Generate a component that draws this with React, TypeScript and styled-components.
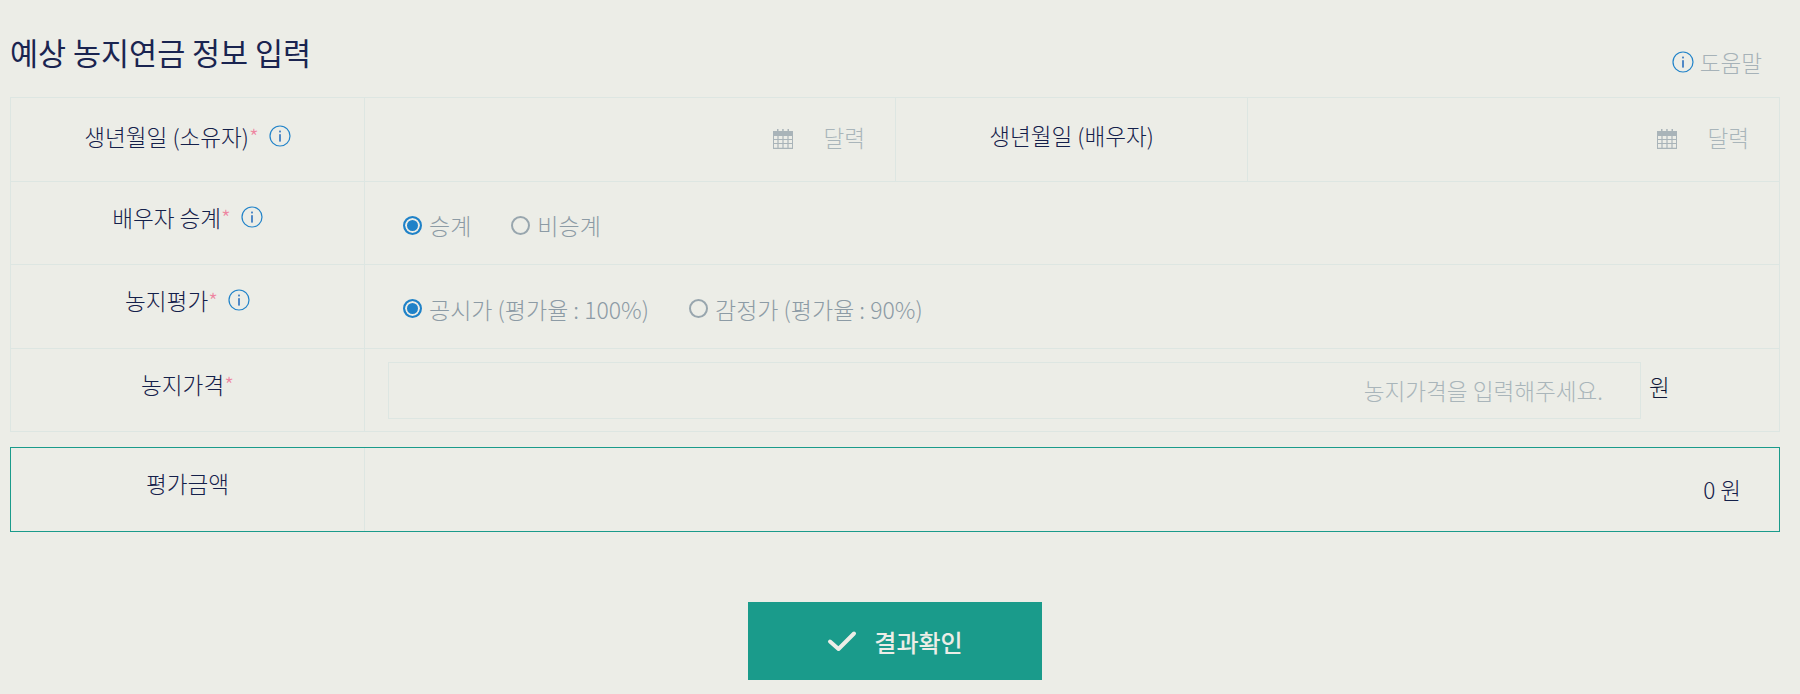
import React from "react";
import styled, { createGlobalStyle } from "styled-components";

const GlobalStyle = createGlobalStyle`
  html, body {
    margin: 0;
    padding: 0;
    background: #ecede7;
    font-family: "Noto Sans CJK KR", "Noto Sans", sans-serif;
    font-weight: 300;
    color: #14204a;
  }
  * {
    box-sizing: border-box;
  }
`;

const InfoIcon = ({ size = 22 }: { size?: number }) => (
  <svg width={size} height={size} viewBox="0 0 22 22" fill="none">
    <circle cx="11" cy="11" r="10" stroke="#2183c9" strokeWidth="1.2" />
    <rect x="10.2" y="9.2" width="1.6" height="7.4" fill="#2a6fbd" />
    <rect x="10.2" y="5.6" width="1.6" height="1.8" fill="#2a6fbd" />
  </svg>
);

const CalendarIcon = () => (
  <svg width="20" height="20" viewBox="0 0 20 20" fill="#a9b4b9">
    <rect x="4" y="0" width="1.5" height="3" />
    <rect x="9.2" y="0" width="1.5" height="3" />
    <rect x="14.5" y="0" width="1.5" height="3" />
    <path d="M0 2h20v18H0zM1 7v3h3.4V7zm4.6 0v3H9.4V7zm5 0v3h3.8V7zm5 0v3H19V7zM1 11v3h3.4v-3zm4.6 0v3H9.4v-3zm5 0v3h3.8v-3zm5 0v3H19v-3zM1 15v3.8h3.4V15zm4.6 0v3.8H9.4V15zm5 0v3.8h3.8V15zm5 0v3.8H19V15z" fillRule="evenodd" />
  </svg>
);

const CheckIcon = () => (
  <svg width="30" height="22" viewBox="0 0 30 22" fill="none">
    <path d="M3 11.5L11.5 19L27 3.5" stroke="#ecede7" strokeWidth="4" strokeLinecap="round" strokeLinejoin="round" />
  </svg>
);

const App = () => {
  return (
    <Page>
      <GlobalStyle />
      <Head>
        <Title>예상 농지연금 정보 입력</Title>
        <Help>
          <InfoIcon />
          도움말
        </Help>
      </Head>
      <Table>
        <Row>
          <Label $top={22}>
            생년월일 (소유자)<Star>*</Star>
            <InfoWrap><InfoIcon /></InfoWrap>
          </Label>
          <DateCell>
            <CalendarIcon />
            <CalendarText>달력</CalendarText>
          </DateCell>
          <Label $top={21}>생년월일 (배우자)</Label>
          <DateCell>
            <CalendarIcon />
            <CalendarText>달력</CalendarText>
          </DateCell>
        </Row>
        <Row>
          <Label>
            배우자 승계<Star>*</Star>
            <InfoWrap><InfoIcon /></InfoWrap>
          </Label>
          <RadioCell>
            <RadioOption><Radio $checked />승계</RadioOption>
            <RadioOption><Radio />비승계</RadioOption>
          </RadioCell>
        </Row>
        <Row>
          <Label>
            농지평가<Star>*</Star>
            <InfoWrap><InfoIcon /></InfoWrap>
          </Label>
          <RadioCell>
            <RadioOption><Radio $checked />공시가 (평가율 : 100%)</RadioOption>
            <RadioOption><Radio />감정가 (평가율 : 90%)</RadioOption>
          </RadioCell>
        </Row>
        <Row>
          <Label>농지가격<Star>*</Star></Label>
          <PriceCell>
            <PriceInput placeholder="농지가격을 입력해주세요." />
            <Unit>원</Unit>
          </PriceCell>
        </Row>
      </Table>
      <ResultBox>
        <Label>평가금액</Label>
        <ResultValue>0 원</ResultValue>
      </ResultBox>
      <Actions>
        <SubmitButton type="button">
          <CheckIcon />
          결과확인
        </SubmitButton>
      </Actions>
    </Page>
  );
};

export default App;

const Page = styled.div`
  width: 1800px;
  height: 694px;
  padding: 0 20px 0 10px;
  overflow: hidden;
`;

const Head = styled.div`
  height: 97px;
  display: flex;
  justify-content: space-between;
`;

const Title = styled.h2`
  margin: 29px 0 0;
  font-size: 30.5px;
  line-height: 46px;
  font-weight: 400;
  color: #1a2450;
`;

const Help = styled.div`
  margin: 44px 18px 0 0;
  height: 36px;
  display: flex;
  align-items: center;
  gap: 6px;
  font-size: 22.6px;
  color: #a6b2b8;
`;

const Table = styled.div`
  border: 1px solid #dde6e2;
`;

const Row = styled.div`
  display: grid;
  grid-template-columns: 354px 531px 352px 1fr;
  height: 83.5px;
  border-bottom: 1px solid #dde6e2;
  &:last-child {
    border-bottom: 0;
    height: 82.5px;
  }
`;

const Label = styled.div<{ $top?: number }>`
  display: flex;
  justify-content: center;
  align-items: flex-start;
  padding-top: ${(p) => p.$top ?? 19}px;
  font-size: 22.6px;
  line-height: 34px;
  color: #14204a;
  border-right: 1px solid #dde6e2;
`;

const Star = styled.span`
  font-size: 22px;
  line-height: 32px;
  color: #ee86a1;
`;

const InfoWrap = styled.span`
  display: flex;
  margin: 5px 0 0 10px;
`;

const DateCell = styled.div`
  display: flex;
  justify-content: flex-end;
  align-items: center;
  padding-right: 30px;
  gap: 30px;
  font-size: 22.6px;
  color: #a9b5ba;
  border-right: 1px solid #dde6e2;
  &:last-child {
    border-right: 0;
  }
`;

const CalendarText = styled.span`
  line-height: 34px;
  margin-bottom: 2px;
`;

const RadioCell = styled.div`
  grid-column: 2 / -1;
  display: flex;
  align-items: center;
  gap: 40px;
  padding: 5px 0 0 38px;
  font-size: 23px;
  color: #8c9ba5;
`;

const RadioOption = styled.label`
  display: flex;
  align-items: center;
  gap: 7px;
`;

const Radio = styled.span<{ $checked?: boolean }>`
  display: block;
  width: 19px;
  height: 19px;
  border-radius: 50%;
  border: 2px solid ${(p) => (p.$checked ? "#1f82c8" : "#98a6ae")};
  background: ${(p) => (p.$checked ? "#1f82c8" : "transparent")};
  box-shadow: ${(p) => (p.$checked ? "inset 0 0 0 2px #ecede7" : "none")};
`;

const PriceCell = styled.div`
  grid-column: 2 / -1;
  display: flex;
  align-items: flex-start;
  padding: 13px 0 0 23px;
`;

const PriceInput = styled.input`
  width: 1253px;
  height: 57px;
  padding: 0 37px 0 10px;
  background: transparent;
  border: 1px solid #dde6e2;
  outline: none;
  text-align: right;
  font: inherit;
  font-size: 22.6px;
  &::placeholder {
    color: #a9b5ba;
    opacity: 1;
  }
`;

const Unit = styled.span`
  margin: 8px 0 0 8px;
  font-size: 22.6px;
  line-height: 34px;
  color: #0f1838;
`;

const ResultBox = styled.div`
  margin-top: 15px;
  height: 85px;
  display: grid;
  grid-template-columns: 354px 1fr;
  border: 1px solid #1a9b8b;
`;

const ResultValue = styled.div`
  display: flex;
  justify-content: flex-end;
  align-items: center;
  padding: 0 38px 0 0;
  font-size: 22.6px;
  color: #14204a;
`;

const Actions = styled.div`
  margin-top: 70px;
  display: flex;
  justify-content: center;
`;

const SubmitButton = styled.button`
  width: 294px;
  height: 78px;
  display: flex;
  justify-content: center;
  align-items: center;
  gap: 17px;
  border: 0;
  background: #1a9b8b;
  color: #ecede7;
  font: inherit;
  font-size: 24px;
  font-weight: 500;
`;
